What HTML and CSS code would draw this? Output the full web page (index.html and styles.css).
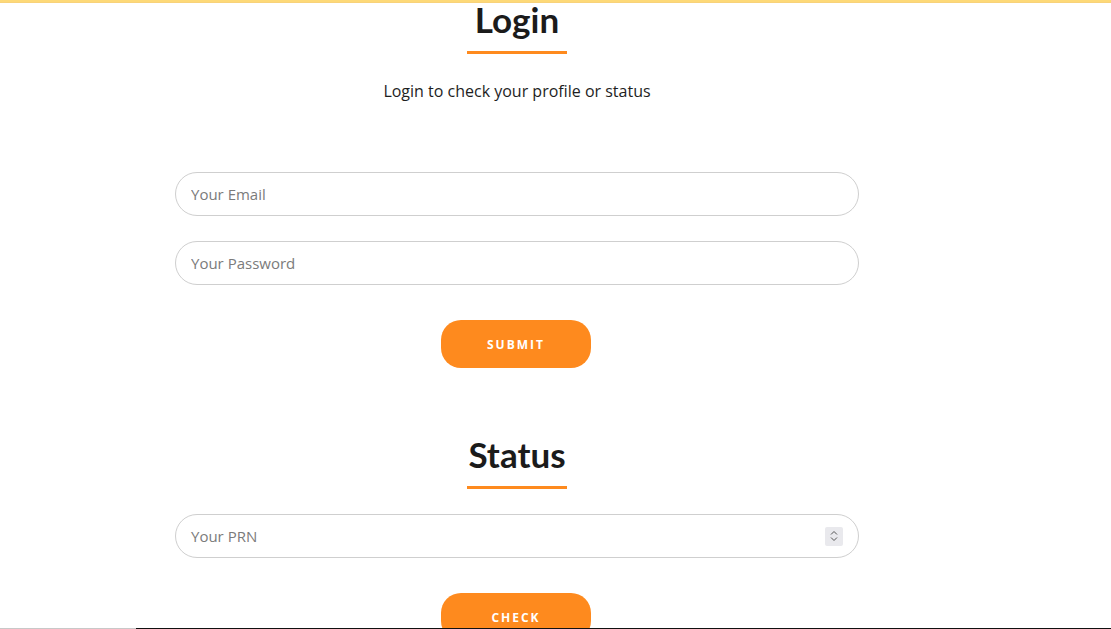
FILE: index.html
```html
<!DOCTYPE html>
<html>
<head>
<meta charset="utf-8">
<link rel="stylesheet" href="styles.css">
</head>
<body>
<div class="topline"></div>
<main class="page">
  <section class="block">
    <h2 class="title">Login</h2>
    <div class="bar"></div>
    <p class="lead">Login to check your profile or status</p>
    <form class="form login-form">
      <input class="field" type="email" placeholder="Your Email">
      <input class="field" type="password" placeholder="Your Password">
      <button class="btn" type="button">Submit</button>
    </form>
  </section>
  <section class="block status">
    <h2 class="title">Status</h2>
    <div class="bar"></div>
    <form class="form status-form">
      <div class="field num">
        <span class="ph">Your PRN</span>
        <span class="spin">
          <svg width="8" height="12" viewBox="0 0 8 12"><path d="M1 4.5 L4 1.5 L7 4.5 M1 7.5 L4 10.5 L7 7.5" fill="none" stroke="#555" stroke-width="1"/></svg>
        </span>
      </div>
      <button class="btn" type="button">Check</button>
    </form>
  </section>
</main>
<div class="bottomline"><span class="seg-a"></span><span class="seg-b"></span></div>
</body>
</html>
```
FILE: styles.css
```css
html, body { margin: 0; padding: 0; background: #fff; overflow: hidden; height: 629px; }
body { font-family: "Open Sans", "Liberation Sans", sans-serif; color: #222; position: relative; }
.topline { height: 2px; background: #fdd978; border-bottom: 1px solid #f8d27a; position: absolute; top: 0; left: 0; right: 0; z-index: 2; }
.page { width: 1033px; box-sizing: border-box; padding: 0 174px 0 175px; }
.block { display: flex; flex-direction: column; align-items: center; }
.title { font-family: Lato, "Liberation Sans", sans-serif; font-weight: 700; font-size: 35px; line-height: 36px; margin: 0; padding-top: 1px; color: #1b1b1b; }
.bar { width: 100px; height: 3px; background: #fe8a1e; margin-top: 14px; }
.lead { font-size: 16px; margin: 26px 0 0; line-height: 22px; color: #1e1e1e; }
.form { width: 100%; display: flex; flex-direction: column; align-items: center; }
.login-form { margin-top: 70px; gap: 25px; }
.field { width: 100%; height: 44px; box-sizing: border-box; border: 1px solid #cfcfcf; border-radius: 22px; padding: 0 15px; font-family: "Open Sans", "Liberation Sans", sans-serif; font-size: 15px; color: #333; background: #fff; outline: none; }
.field::placeholder { color: #7b7b7b; }
.btn { width: 150px; height: 48px; border: none; border-radius: 20px; background: #fe8a1e; color: #fff; font-family: "Open Sans", "Liberation Sans", sans-serif; font-weight: 700; font-size: 12px; letter-spacing: 2px; text-transform: uppercase; margin: 10px 0 0 -2px; }
.status { margin-top: 67px; }
.status-form { margin-top: 25px; gap: 25px; }
.num { display: flex; align-items: center; justify-content: space-between; padding-right: 15px; }
.ph { color: #7b7b7b; }
.spin { width: 18px; height: 19px; background: #e9e9ed; display: flex; align-items: center; justify-content: center; border-radius: 2px; }
.bottomline { position: absolute; left: 0; right: 0; top: 628px; height: 1px; display: flex; }
.seg-a { width: 136px; background: #c8c8c8; }
.seg-b { flex: 1; background: #111; }
```
